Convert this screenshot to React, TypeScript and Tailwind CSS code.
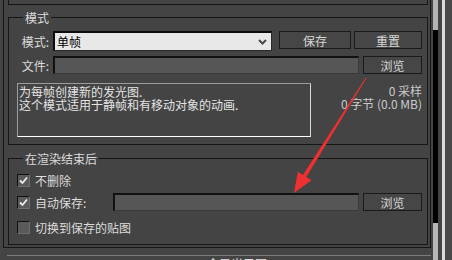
import type { ReactNode } from "react";

function Btn({ className, children }: { className: string; children: ReactNode }) {
  return (
    <div
      className={`h-[18px] flex items-center justify-center border border-[#1a1a1a] bg-[#464646] text-[#d6d6d6] ${className}`}
    >
      {children}
    </div>
  );
}

function Check({ on }: { on: boolean }) {
  return (
    <div className="w-[13px] h-[13px] flex items-center justify-center border border-t-[#111] border-l-[#111] border-b-[#6e6e6e] border-r-[#6e6e6e] bg-[#5a5a5a]">
      {on && (
        <svg width="9" height="9" viewBox="0 0 9 9">
          <path d="M1 4.5 L3.5 7 L8 1.5" stroke="#ececec" strokeWidth="1.8" fill="none" />
        </svg>
      )}
    </div>
  );
}

function Field({ className }: { className: string }) {
  return (
    <div
      className={`h-[18px] bg-[#565656] border-t-2 border-l-2 border-t-[#111] border-l-[#111] border-b border-r border-b-[#3a3a3a] border-r-[#3a3a3a] ${className}`}
    />
  );
}

export default function App() {
  return (
    <div className="relative w-[452px] h-[260px] overflow-hidden bg-[#444444] flex text-[12px] leading-[15px] text-[#dcdcdc] font-['Noto_Sans_CJK_SC','Liberation_Sans',sans-serif]">
      <div className="w-[433px] flex flex-col">
        {/* rollout body */}
        <div className="ml-[3px] w-[428px] border-l border-r border-b border-[#161616] pl-[4px] pr-[2px] pb-[2px]">
          <div className="h-[5px] border-l border-r border-b border-[#161616]" />

          <fieldset className="mt-[5px] border border-[#161616] pl-[8px] pr-[5px] pt-[6px] pb-[7px]">
            <legend className="ml-[6px] px-[2px] leading-[15px]">模式</legend>
            <div className="flex items-start">
              <div className="w-[36px] h-[20px] flex items-center justify-end pr-[4px]">模式:</div>
              <div className="w-[219px] h-[20px] flex items-center justify-between bg-[#e8e8e8] text-black border-t-2 border-l-2 border-t-[#0c0c0c] border-l-[#0c0c0c] border-b border-r border-b-[#2a2a2a] border-r-[#2a2a2a] pl-[2px] pr-[4px]">
                <span>单帧</span>
                <svg width="9" height="6" viewBox="0 0 9 6">
                  <path d="M1 1 L4.5 4.5 L8 1" stroke="#4a4a4a" strokeWidth="2" fill="none" />
                </svg>
              </div>
              <Btn className="ml-[7px] w-[72px]">保存</Btn>
              <Btn className="ml-[3px] w-[68px]">重置</Btn>
            </div>
            <div className="mt-[5px] flex items-start">
              <div className="w-[36px] h-[18px] flex items-center justify-end pr-[4px]">文件:</div>
              <Field className="w-[306px]" />
              <Btn className="ml-[4px] w-[59px]">浏览</Btn>
            </div>
            <div className="mt-[9px] flex items-start leading-[13px]">
              <div className="w-[294px] h-[54px] border border-t-[#9c9c9c] border-l-[#9c9c9c] border-b-white border-r-[#d8d8d8] pl-[1px] pt-[1px] text-[#e4e4e4]">
                <div>为每帧创建新的发光图.</div>
                <div>这个模式适用于静帧和有移动对象的动画.</div>
              </div>
              <div className="flex-1 mt-[1px] text-right text-[#cacaca]">
                <div>0 采样</div>
                <div>0 字节 (0.0 MB)</div>
              </div>
            </div>
          </fieldset>

          <fieldset className="mt-[6px] border border-[#161616] pl-[8px] pr-[5px] pt-[7px] pb-[9px]">
            <legend className="ml-[6px] px-[2px] leading-[15px]">在渲染结束后</legend>
            <div className="h-[15px] flex items-center gap-[5px]">
              <Check on />
              <span>不删除</span>
            </div>
            <div className="mt-[5px] h-[18px] flex items-center">
              <Check on />
              <span className="ml-[5px] w-[78px]">自动保存:</span>
              <Field className="w-[246px]" />
              <Btn className="ml-[4px] w-[59px]">浏览</Btn>
            </div>
            <div className="mt-[9px] h-[15px] flex items-center gap-[5px]">
              <Check on={false} />
              <span>切换到保存的贴图</span>
            </div>
          </fieldset>
        </div>

        {/* next rollout header */}
        <div className="mt-[7px] ml-[7px] w-[424px] border-t border-[#7c7c7c] pl-[200px] text-[#e0e0e0]">
          全局光子图
        </div>
      </div>

      {/* scroll bar */}
      <div className="w-[5px] flex flex-col">
        <div className="h-[30px] bg-[#b4b4b4]" />
        <div className="h-[193px] bg-black" />
        <div className="flex-1 bg-[#b8b8b8]" />
      </div>
      <div className="w-[4px]" />
      <div className="w-[3px] bg-[#dadada]" />
      <div className="flex-1 bg-[#484848]" />

      {/* red arrow */}
      <svg className="absolute inset-0 pointer-events-none" width="452" height="260" viewBox="0 0 452 260">
        <polygon
          points="366.4,78.2 306.3,177.1 311.4,180.2 294,193 297.8,171.8 302.9,174.9 365.6,77.8"
          fill="#ee3030"
        />
      </svg>
    </div>
  );
}
